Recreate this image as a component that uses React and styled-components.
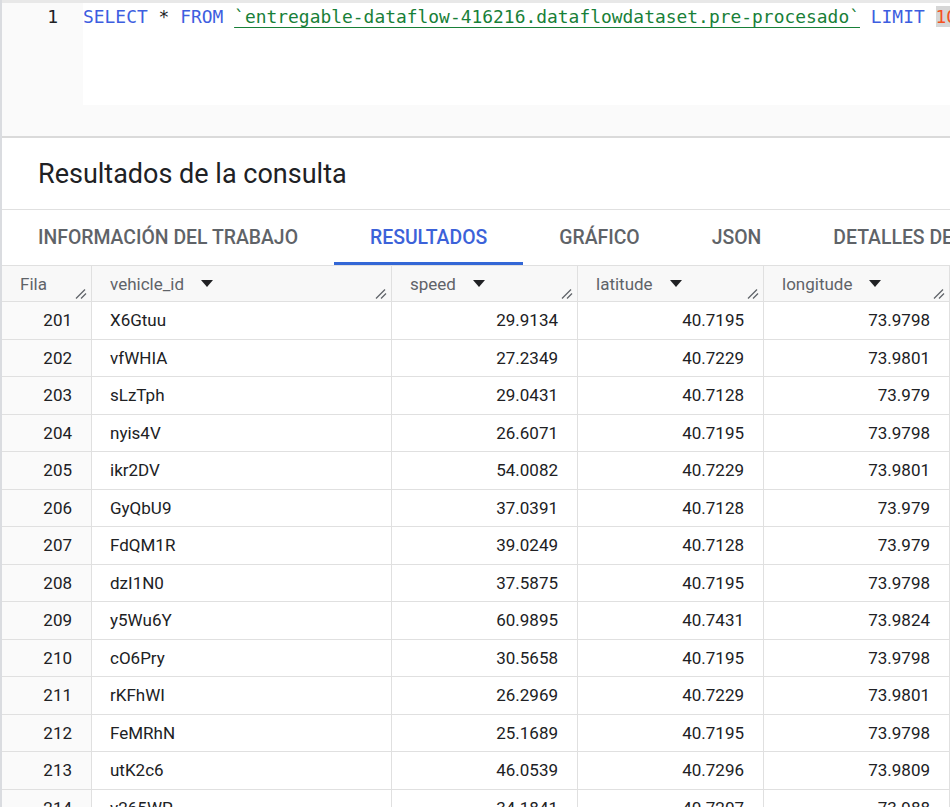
import React from "react";
import styled, { createGlobalStyle } from "styled-components";

const GlobalStyle = createGlobalStyle`
  html, body {
    margin: 0;
    padding: 0;
    background: #ffffff;
    overflow: hidden;
  }
  body {
    font-family: Roboto, "Liberation Sans", Arial, sans-serif;
    color: #202124;
  }
  * {
    box-sizing: border-box;
  }
`;

const Page = styled.div`
  width: 950px;
  height: 807px;
  overflow: hidden;
  border-left: 2px solid #dadce0;
  display: flex;
  flex-direction: column;
`;

// editor
const Editor = styled.div`
  border-top: 3px solid #e8e8e8;
  background: #fafafa;
  height: 138px;
  border-bottom: 2px solid #dadada;
  flex-shrink: 0;
`;

const EditorBody = styled.div`
  display: flex;
  height: 102px;
`;

const Gutter = styled.div`
  width: 81px;
  background: #fafafa;
  text-align: right;
  padding-right: 25px;
  font-family: "DejaVu Sans Mono", "Liberation Mono", monospace;
  font-size: 18px;
  line-height: 28px;
  color: #202124;
`;

const Code = styled.div`
  flex: 1;
  background: #ffffff;
  white-space: pre;
  overflow: hidden;
  font-family: "DejaVu Sans Mono", "Liberation Mono", monospace;
  font-size: 17.9px;
  line-height: 28px;
  letter-spacing: 0.02px;
`;

const Token = styled.span`
  color: ${(p) =>
    p.kind === "kw" ? "#3d5ee0" : p.kind === "str" ? "#188038" : p.kind === "num" ? "#f4511e" : "#202124"};
  text-decoration: ${(p) => (p.kind === "str" ? "underline" : "none")};
  text-underline-offset: 4px;
  background: ${(p) => (p.hl ? "#d6d6d6" : "transparent")};
`;

// results
const Results = styled.div`
  flex: 1;
  display: flex;
  flex-direction: column;
  background: #ffffff;
`;

const Title = styled.h2`
  margin: 0;
  height: 72px;
  padding-left: 36px;
  display: flex;
  align-items: center;
  font-size: 27px;
  font-weight: 400;
  color: #202124;
  border-bottom: 1px solid #e0e0e0;
  flex-shrink: 0;
`;

const Tabs = styled.div`
  display: flex;
  height: 56px;
  border-bottom: 1px solid #e0e0e0;
  white-space: nowrap;
  flex-shrink: 0;
`;

const Tab = styled.div`
  padding: 3px 36px 0;
  display: flex;
  align-items: center;
  font-size: 19.4px;
  font-weight: 500;
  color: ${(p) => (p.active ? "#3c62d9" : "#5f6368")};
  border-bottom: 3px solid ${(p) => (p.active ? "#3367d6" : "transparent")};
  flex-shrink: 0;
`;

const Table = styled.div`
  display: grid;
  grid-template-columns: 90px 300px 186px 186px 186px;
  grid-auto-rows: 37.5px;
  grid-template-rows: 36px;
`;

const HeadCell = styled.div`
  position: relative;
  display: flex;
  align-items: center;
  padding-left: 18px;
  background: #f8f8f8;
  border-bottom: 1px solid #e0e0e0;
  border-right: 1px solid #e0e0e0;
  font-size: 17px;
  color: #5f6368;
`;

const Arrow = styled.span`
  width: 0;
  height: 0;
  margin-left: 17px;
  border-left: 6px solid transparent;
  border-right: 6px solid transparent;
  border-top: 7px solid #202124;
`;

const Handle = styled.svg`
  position: absolute;
  right: 4px;
  bottom: 2px;
`;

const Cell = styled.div`
  display: flex;
  align-items: center;
  justify-content: ${(p) => (p.right ? "flex-end" : "flex-start")};
  padding: ${(p) => (p.right ? "0 19px 0 0" : "0 0 0 18px")};
  background: ${(p) => (p.index ? "#fafafa" : "#ffffff")};
  border-bottom: 1px solid #e0e0e0;
  border-right: 1px solid #e0e0e0;
  font-size: 17px;
  color: #202124;
`;

const rows = [
  ["201", "X6Gtuu", "29.9134", "40.7195", "73.9798"],
  ["202", "vfWHIA", "27.2349", "40.7229", "73.9801"],
  ["203", "sLzTph", "29.0431", "40.7128", "73.979"],
  ["204", "nyis4V", "26.6071", "40.7195", "73.9798"],
  ["205", "ikr2DV", "54.0082", "40.7229", "73.9801"],
  ["206", "GyQbU9", "37.0391", "40.7128", "73.979"],
  ["207", "FdQM1R", "39.0249", "40.7128", "73.979"],
  ["208", "dzI1N0", "37.5875", "40.7195", "73.9798"],
  ["209", "y5Wu6Y", "60.9895", "40.7431", "73.9824"],
  ["210", "cO6Pry", "30.5658", "40.7195", "73.9798"],
  ["211", "rKFhWI", "26.2969", "40.7229", "73.9801"],
  ["212", "FeMRhN", "25.1689", "40.7195", "73.9798"],
  ["213", "utK2c6", "46.0539", "40.7296", "73.9809"],
  ["214", "v265WP", "34.1841", "40.7207", "73.988"],
];

const ResizeIcon = () => (
  <Handle width="12" height="10" viewBox="0 0 12 10">
    <line x1="1" y1="9.5" x2="10" y2="0.5" stroke="#5f6368" strokeWidth="1.2" />
    <line x1="6" y1="9.5" x2="11" y2="4.5" stroke="#5f6368" strokeWidth="1.2" />
  </Handle>
);

const headers = ["vehicle_id", "speed", "latitude", "longitude"];

export default function App() {
  return (
    <>
      <GlobalStyle />
      <Page>
        <Editor>
          <EditorBody>
            <Gutter>1</Gutter>
            <Code>
              <Token kind="kw">SELECT</Token> * <Token kind="kw">FROM</Token>{" "}
              <Token kind="str">`entregable-dataflow-416216.dataflowdataset.pre-procesado`</Token>{" "}
              <Token kind="kw">LIMIT</Token> <Token kind="num" hl>10</Token>
            </Code>
          </EditorBody>
        </Editor>
        <Results>
          <Title>Resultados de la consulta</Title>
          <Tabs>
            <Tab>INFORMACIÓN DEL TRABAJO</Tab>
            <Tab active>RESULTADOS</Tab>
            <Tab>GRÁFICO</Tab>
            <Tab>JSON</Tab>
            <Tab>DETALLES DE LA EJECUCIÓN</Tab>
          </Tabs>
          <Table>
            <HeadCell>
              Fila
              <ResizeIcon />
            </HeadCell>
            {headers.map((h) => (
              <HeadCell key={h}>
                {h}
                <Arrow />
                <ResizeIcon />
              </HeadCell>
            ))}
            {rows.map((r) =>
              r.map((v, i) => (
                <Cell key={r[0] + i} index={i === 0} right={i !== 1}>
                  {v}
                </Cell>
              ))
            )}
          </Table>
        </Results>
      </Page>
    </>
  );
}
